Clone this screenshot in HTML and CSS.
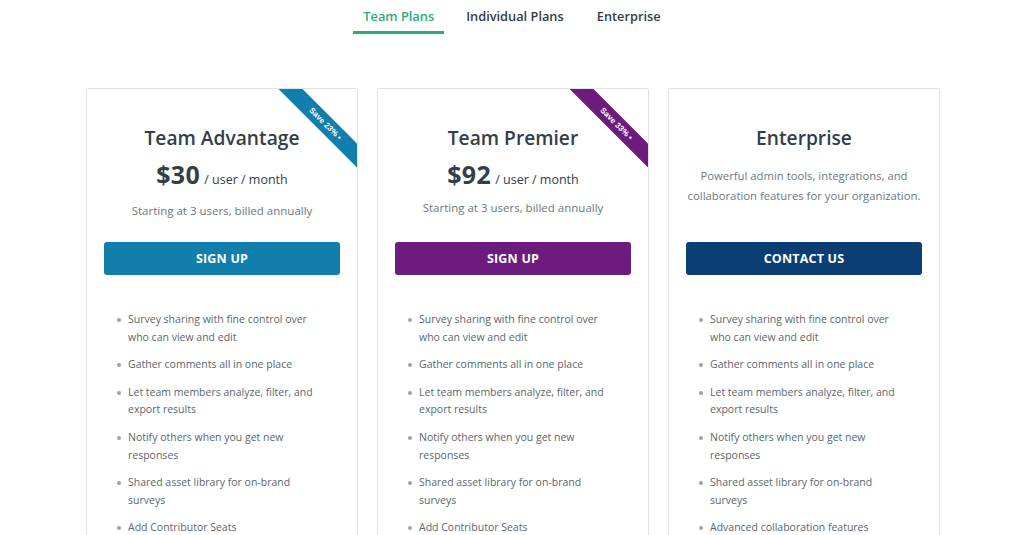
FILE: index.html
```html
<!DOCTYPE html>
<html>
<head>
<meta charset="utf-8">
<link rel="stylesheet" href="styles.css">
</head>
<body>
<nav class="tabs">
  <a class="tab active">Team Plans</a>
  <a class="tab">Individual Plans</a>
  <a class="tab">Enterprise</a>
</nav>
<main class="cards">
  <section class="card">
    <div class="ribbon ribbon-blue">Save 23% •</div>
    <div class="head">
      <h2 class="title">Team Advantage</h2>
      <div class="price"><span class="amount">$30</span> <span class="per">/ user / month</span></div>
      <p class="sub">Starting at 3 users, billed annually</p>
    </div>
    <button class="btn btn-blue">SIGN UP</button>
    <ul class="features">
      <li>Survey sharing with fine control over who can view and edit</li>
      <li>Gather comments all in one place</li>
      <li>Let team members analyze, filter, and export results</li>
      <li>Notify others when you get new responses</li>
      <li>Shared asset library for on-brand surveys</li>
      <li>Add Contributor Seats</li>
    </ul>
  </section>
  <section class="card">
    <div class="ribbon ribbon-purple">Save 33% •</div>
    <div class="head">
      <h2 class="title">Team Premier</h2>
      <div class="price"><span class="amount">$92</span> <span class="per">/ user / month</span></div>
      <p class="sub sub-tight">Starting at 3 users, billed annually</p>
    </div>
    <button class="btn btn-purple">SIGN UP</button>
    <ul class="features">
      <li>Survey sharing with fine control over who can view and edit</li>
      <li>Gather comments all in one place</li>
      <li>Let team members analyze, filter, and export results</li>
      <li>Notify others when you get new responses</li>
      <li>Shared asset library for on-brand surveys</li>
      <li>Add Contributor Seats</li>
    </ul>
  </section>
  <section class="card">
    <div class="head">
      <h2 class="title">Enterprise</h2>
      <p class="desc">Powerful admin tools, integrations, and<br>collaboration features for your organization.</p>
    </div>
    <button class="btn btn-navy">CONTACT US</button>
    <ul class="features">
      <li>Survey sharing with fine control over who can view and edit</li>
      <li>Gather comments all in one place</li>
      <li>Let team members analyze, filter, and export results</li>
      <li>Notify others when you get new responses</li>
      <li>Shared asset library for on-brand surveys</li>
      <li>Advanced collaboration features</li>
    </ul>
  </section>
</main>
</body>
</html>
```

FILE: styles.css
```css
* { box-sizing: border-box; }
html, body { margin: 0; padding: 0; background: #fff; }
body {
  font-family: "Open Sans", "Liberation Sans", sans-serif;
  color: #333e48;
  height: 535px;
  overflow: hidden;
}
.tabs {
  display: flex;
  justify-content: center;
  gap: 11px;
  padding-left: 1px;
  height: 34px;
}
.tab {
  font-size: 12.8px;
  font-weight: 600;
  color: #333e48;
  padding: 7px 11px 0;
  height: 34px;
  border-bottom: 3px solid transparent;
}
.tab.active {
  color: #2aae75;
  border-bottom-color: #2aae75;
  padding: 7px 10px 0;
}
.cards {
  display: flex;
  justify-content: flex-start;
  gap: 19px;
  margin-top: 54px;
  padding-left: 86px;
}
.card {
  position: relative;
  overflow: hidden;
  width: 272px;
  height: 500px;
  border: 1px solid #e0e3e6;
  border-radius: 2px;
  padding: 0 17px;
}
.ribbon {
  position: absolute;
  left: 170px;
  top: 25px;
  width: 134px;
  height: 17px;
  transform: rotate(45deg);
  color: #fff;
  font-family: "Liberation Sans", Arial, sans-serif;
  font-size: 8px;
  font-weight: 700;
  line-height: 17px;
  text-align: center;
  padding-left: 4px;
}
.ribbon-blue { background: #127eab; }
.ribbon-purple { background: #6b1c7d; }
.head {
  height: 153px;
  padding-top: 35px;
  text-align: center;
}
.title {
  margin: 0;
  font-size: 19.2px;
  font-weight: 600;
  line-height: 28px;
  color: #333e48;
}
.price {
  margin-top: 4px;
  line-height: 36px;
}
.amount {
  font-size: 25px;
  font-weight: 700;
  color: #333e48;
  letter-spacing: 0.3px;
}
.per {
  font-size: 12.5px;
  color: #333e48;
}
.sub {
  margin: 4px 0 0;
  font-size: 11.5px;
  line-height: 18px;
  color: #6b787f;
}
.sub-tight { margin-top: 1px; }
.desc {
  margin: 14px -8px 0;
  font-size: 11.3px;
  line-height: 19.5px;
  color: #6b787f;
  white-space: nowrap;
}
.btn {
  display: block;
  width: 236px;
  height: 33px;
  border: 0;
  border-radius: 3px;
  color: #fff;
  font-family: "Open Sans", "Liberation Sans", sans-serif;
  font-size: 12.5px;
  font-weight: 700;
  letter-spacing: 0.2px;
  cursor: pointer;
}
.btn-blue { background: #127eab; }
.btn-purple { background: #6b1c7d; }
.btn-navy { background: #0b3f73; }
.features {
  list-style: none;
  margin: 36px 0 0;
  padding: 0 8px 0 24px;
}
.features li {
  position: relative;
  font-size: 10.5px;
  line-height: 17.5px;
  color: #5a666d;
  margin-bottom: 10.2px;
  padding-right: 6px;
}
.features li::before {
  content: "";
  position: absolute;
  left: -11px;
  top: 7px;
  width: 4px;
  height: 4px;
  border-radius: 50%;
  background: #9aa3a8;
}
```
